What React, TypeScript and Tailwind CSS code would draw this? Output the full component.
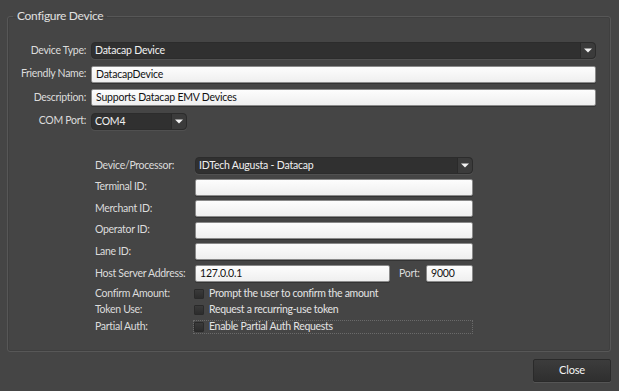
import React from "react";

const font = { fontFamily: "Lato, 'Open Sans', sans-serif" };

function Arrow() {
  return (
    <svg width="8" height="5" viewBox="0 0 8 5">
      <path d="M0 0.5h8L4 4.5z" fill="#f2f2f2" />
    </svg>
  );
}

function Dropdown({ value, className }: { value: string; className: string }) {
  return (
    <div
      className={`flex h-[17px] items-stretch rounded-[4px] border border-[#2c2c2c] bg-[#303030] shadow-[0_1px_0_#505050] ${className}`}
    >
      <span className="flex-1 truncate pl-[3px] text-[10.5px] leading-[15px] tracking-[-0.2px] text-[#f0f0f0]">{value}</span>
      <span className="flex w-[15px] items-center justify-center rounded-r-[4px] border-l border-[#2a2a2a] bg-[#3b3b3b]">
        <Arrow />
      </span>
    </div>
  );
}

function TextBox({ value = "", className = "" }: { value?: string; className?: string }) {
  return (
    <div
      className={`h-[17px] rounded-[2px] border border-[#8a8a8a] bg-gradient-to-b from-[#fdfdfd] to-[#efefef] pl-[4px] text-[10.5px] leading-[15px] tracking-[-0.2px] text-[#111] shadow-[0_1px_0_#333] ${className}`}
    >
      {value}
    </div>
  );
}

function TopRow({ label, children }: { label: string; children: React.ReactNode }) {
  return (
    <div className="flex h-[17px] items-center">
      <span className="w-[78px] shrink-0 whitespace-nowrap text-right text-[10.5px] tracking-[-0.3px] text-[#dcdcdc]">{label}</span>
      <div className="ml-[5px] mr-[14px] flex flex-1">{children}</div>
    </div>
  );
}

function SubRow({ label, children }: { label: string; children: React.ReactNode }) {
  return (
    <div className="flex h-[17px] items-center">
      <span className="w-[100px] shrink-0 whitespace-nowrap text-[10.5px] tracking-[-0.3px] text-[#dcdcdc]">{label}</span>
      {children}
    </div>
  );
}

function CheckRow({ label, text, focused }: { label: string; text: string; focused?: boolean }) {
  return (
    <div className="flex h-[16.5px] items-center">
      <span className="w-[98px] shrink-0 whitespace-nowrap text-[10.5px] tracking-[-0.3px] text-[#dcdcdc]">{label}</span>
      <div
        className={`flex h-[14px] w-[280px] items-center ${
          focused ? "border border-dotted border-[#6a6a6a]" : "border border-transparent"
        }`}
      >
        <span className="h-[10px] w-[10px] rounded-[1px] border border-[#2a2a2a] bg-gradient-to-b from-[#3a3a3a] to-[#2c2c2c]" />
        <span className="ml-[5px] whitespace-nowrap text-[10.5px] tracking-[-0.3px] text-[#e4e4e4]">{text}</span>
      </div>
    </div>
  );
}

export default function App() {
  return (
    <div className="flex h-[391px] w-[619px] flex-col bg-[#454545]" style={font}>
      <fieldset className="mx-[7px] mr-[8px] mt-[7px] h-[345px] rounded-[3px] border border-[#575757] pb-0 shadow-[inset_0_0_0_1px_#3f3f3f]">
        <legend className="ml-[5px] px-[4px] text-[12px] leading-[18px] tracking-[-0.3px] text-[#e0e0e0]">Configure Device</legend>
        <div className="mt-[17px] flex flex-col gap-[6.5px]">
          <TopRow label="Device Type:">
            <Dropdown value="Datacap Device" className="flex-1" />
          </TopRow>
          <TopRow label="Friendly Name:">
            <TextBox value="DatacapDevice" className="flex-1" />
          </TopRow>
          <TopRow label="Description:">
            <TextBox value="Supports Datacap EMV Devices" className="flex-1" />
          </TopRow>
          <TopRow label="COM Port:">
            <Dropdown value="COM4" className="w-[96px]" />
          </TopRow>
        </div>

        <div className="ml-[87px] mt-[27.5px] flex flex-col gap-[4.6px]">
          <SubRow label="Device/Processor:">
            <Dropdown value="IDTech Augusta - Datacap" className="w-[278px]" />
          </SubRow>
          <SubRow label="Terminal ID:">
            <TextBox className="w-[278px]" />
          </SubRow>
          <SubRow label="Merchant ID:">
            <TextBox className="w-[278px]" />
          </SubRow>
          <SubRow label="Operator ID:">
            <TextBox className="w-[278px]" />
          </SubRow>
          <SubRow label="Lane ID:">
            <TextBox className="w-[278px]" />
          </SubRow>
          <SubRow label="Host Server Address:">
            <TextBox value="127.0.0.1" className="w-[195px]" />
            <span className="ml-[9px] w-[27px] text-[10.5px] tracking-[-0.3px] text-[#dcdcdc]">Port:</span>
            <TextBox value="9000" className="w-[47px]" />
          </SubRow>
        </div>

        <div className="ml-[87px] mt-[3.5px] flex flex-col">
          <CheckRow label="Confirm Amount:" text="Prompt the user to confirm the amount" />
          <CheckRow label="Token Use:" text="Request a recurring-use token" />
          <CheckRow label="Partial Auth:" text="Enable Partial Auth Requests" focused />
        </div>
      </fieldset>

      <div className="mr-[8px] mt-[7px] flex justify-end">
        <button className="h-[23px] w-[78px] rounded-[2px] border border-[#2a2a2a] bg-gradient-to-b from-[#3c3c3c] to-[#2f2f2f] text-[11px] tracking-[-0.2px] text-[#f4f4f4] shadow-[0_1px_0_#555]">
          Close
        </button>
      </div>
    </div>
  );
}
